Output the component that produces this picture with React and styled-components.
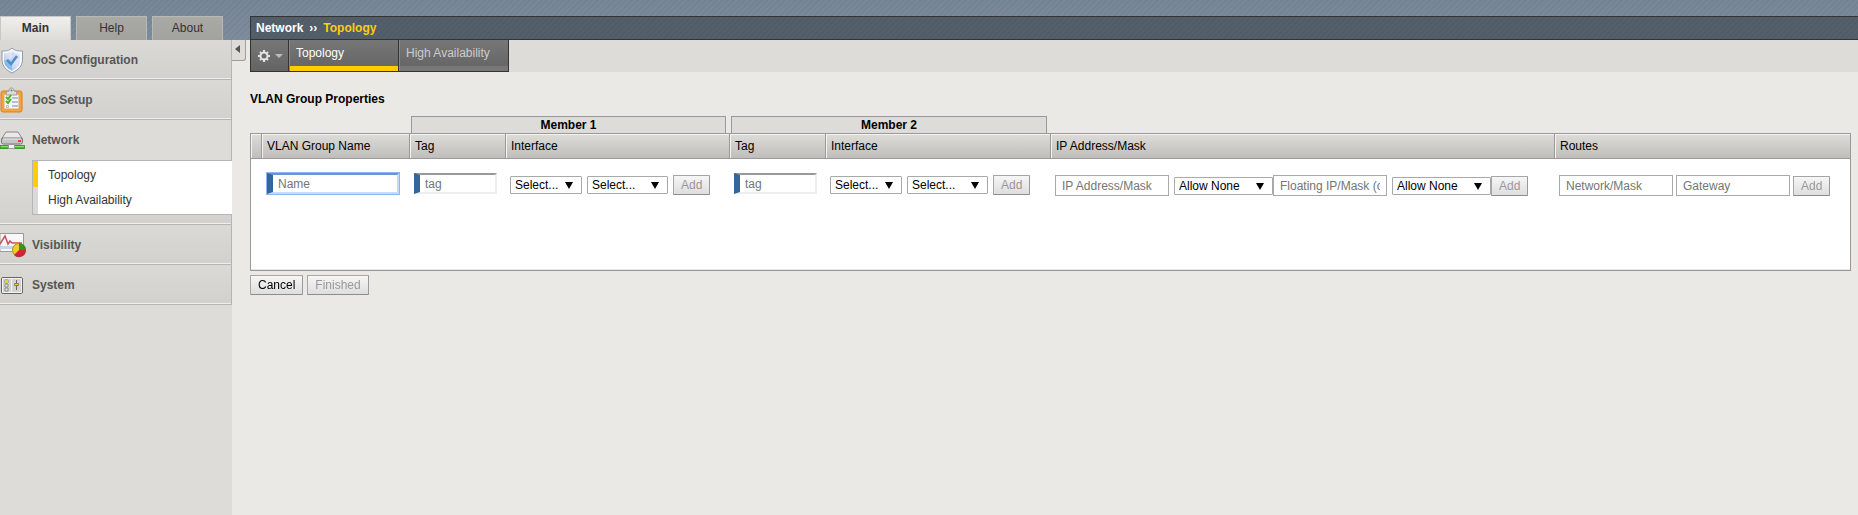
import React from "react";
import styled, { createGlobalStyle, css } from "styled-components";

const Global = createGlobalStyle`
  *, *::before, *::after { box-sizing: border-box; }
  html, body { margin: 0; }
  body, button, input, select, table {
    font: 12px/14px "Liberation Sans", Arial, sans-serif;
  }
  body { background: #eae9e5; color: #000; }
  a { color: inherit; text-decoration: none; }
  ul { list-style: none; margin: 0; padding: 0; }
`;

const Page = styled.div`
  min-height: 100vh;
  display: flex;
  background: linear-gradient(#738294 0, #7a8899 40px, transparent 40px);
`;

const stripes = css`
  background-image: repeating-linear-gradient(
    135deg,
    rgba(255, 255, 255, ${(p) => p.$stripe || 0.04}) 0 2px,
    transparent 2px 4px
  );
`;

const Shell = styled.div`
  flex: 1;
  min-width: 0;
  display: flex;
  ${stripes}
  background-size: 100% 40px;
  background-repeat: no-repeat;
`;

const Side = styled.aside`
  width: 232px;
  flex: none;
  padding-top: 16px;
  display: flex;
  flex-direction: column;
`;

const SideTabs = styled.nav`
  display: flex;
  gap: 5px;
`;

const SideTab = styled.a`
  width: 71px;
  height: 24px;
  padding-top: 4px;
  text-align: center;
  color: #333;
  border: 1px solid #b8b8b5;
  border-bottom: 0;
  background: linear-gradient(#a9a9a5, #a2a29e);
  ${(p) =>
    p.$active &&
    css`
      font-weight: bold;
      border-color: #c8c8c4;
      background: linear-gradient(#f0efed, #dddcd8);
    `}
`;

const SideBody = styled.div`
  flex: 1;
  background: #dddcd8;
`;

const Section = styled.li`
  border-bottom: 1px solid #b5b5b3;
  border-right: 1px solid #b5b5b3;
  box-shadow: inset 0 -1px #eeeeec;
  background: ${(p) =>
    p.$open
      ? "linear-gradient(#dddcd8 50%, #d2d1cd)"
      : "linear-gradient(#dad9d5, #d2d1cd)"};
  padding-bottom: ${(p) => (p.$open ? "9px" : "0")};
`;

const SectionLink = styled.a`
  display: flex;
  align-items: center;
  gap: 6px;
  height: ${(p) => (p.$open ? "40px" : "39px")};
  font-weight: bold;
  color: #555;
  svg { flex: none; }
`;

const SubMenu = styled.ul`
  margin-left: 32px;
  margin-right: -1px;
  border: 1px solid #b5b5b3;
  border-right: 0;
  background: #fff;
`;

const SubItem = styled.li`
  border-left: 5px solid ${(p) => (p.$active ? "#fc0" : "#dad9d9")};
  & + & a { border-top: 1px solid #e0e0e0; }
  a {
    display: block;
    height: ${(p) => (p.$active ? "26px" : "27px")};
    padding: ${(p) => (p.$active ? "7px" : "6px")} 10px 0;
    color: #333;
  }
`;

const Collapse = styled.button`
  flex: none;
  align-self: flex-start;
  margin-top: 40px;
  width: 14px;
  height: 21px;
  padding: 0 3px 2px;
  border: 1px solid #9d9d9a;
  border-width: 0 1px 1px 0;
  border-radius: 0 0 3px 0;
  background: #dddcd8;
  svg { display: block; }
`;

const Main = styled.main`
  flex: 1;
  min-width: 0;
  padding-top: 16px;
  margin-left: 4px;
`;

const Crumbs = styled.div`
  height: 24px;
  padding: 4px 5px;
  display: flex;
  gap: 6px;
  border: 1px solid #333;
  border-right: 0;
  background-color: #505c68;
  ${stripes}
  color: #fff;
  font-weight: bold;
  strong { color: #fc1; }
`;

const TabStrip = styled.nav`
  display: flex;
  height: 32px;
  background: #dddcd8;
`;

const tabSkin = css`
  border: 0;
  border-right: 1px solid #333;
  border-bottom: 1px solid #333;
  background: linear-gradient(#777, #636363);
`;

const GearButton = styled.button`
  ${tabSkin}
  width: 39px;
  border-left: 1px solid #333;
  padding: 0 5px 0 6px;
  display: flex;
  align-items: center;
  justify-content: space-between;
`;

const TopTab = styled.a`
  ${tabSkin}
  width: 110px;
  padding: 6px 7px;
  color: ${(p) => (p.$active ? "#fff" : "#ccc")};
  box-shadow: inset 1px 0 #888, inset 0 -5px ${(p) => (p.$active ? "#fc0" : "#777")};
`;

const Content = styled.form`
  padding: 20px 7px 0 0;
`;

const Title = styled.h1`
  margin: 0 0 10px;
  font-size: 12px;
  line-height: 14px;
`;

const Grid = styled.table`
  width: 100%;
  table-layout: fixed;
  border-collapse: separate;
  border-spacing: 0;
`;

const Group = styled.th`
  padding: 0 4px 0 1px;
  span {
    display: block;
    height: 17px;
    padding-top: 1px;
    border: 1px solid #999;
    border-bottom: 0;
    background: #dddcd8;
  }
`;

const Head = styled.th`
  height: 26px;
  padding: 0 0 1px 5px;
  text-align: left;
  font-weight: normal;
  border: 1px solid #999;
  border-left-width: ${(p) => (p.$first ? "1px" : "0")};
  background: linear-gradient(#dddcd8, #bfbeba);
  box-shadow: inset 1px 1px #f4f4f2;
`;

const Cell = styled.td`
  height: 112px;
  padding: ${(p) => p.$top || 16}px 0 0 ${(p) => p.$left || 4}px;
  vertical-align: top;
  background: #fff;
  border-bottom: 1px solid #999;
  box-shadow: inset 0 -1px #e4e4e4;
  &:first-child { border-left: 1px solid #999; }
  &:last-child { border-right: 1px solid #999; }
`;

const Line = styled.div`
  display: flex;
  align-items: flex-end;
  gap: ${(p) => p.$gap || 0}px;
`;

const Field = styled.input`
  width: 114px;
  height: 21px;
  padding: 0 6px;
  border: 1px solid #a9a9a9;
  border-radius: 0;
  background: #fff;
  color: #000;
  outline: 0;
  &::placeholder { color: #757575; opacity: 1; }
`;

const RequiredField = styled(Field)`
  width: ${(p) => p.$width}px;
  padding: 0 5px;
  border: 2px solid #eee;
  border-top-color: #999;
  border-left: 6px solid #369;
  &:focus {
    border-top-color: #6f93cd;
    border-right-color: #c8dafa;
    border-bottom-color: #c8dafa;
    box-shadow: 0 0 0 1px #8fb4f8;
  }
`;

const SelectBox = styled.span`
  display: inline-grid;
  align-items: center;
  width: ${(p) => p.$width}px;
  height: 18px;
  margin-bottom: 1px;
  &::after {
    content: "";
    grid-area: 1 / 1;
    justify-self: end;
    margin-right: 9px;
    border: solid transparent;
    border-width: 7px 4px 0;
    border-top-color: #000;
    pointer-events: none;
  }
  select {
    grid-area: 1 / 1;
    appearance: none;
    width: 100%;
    height: 18px;
    padding: 0 4px;
    border: 1px solid #a9a9a9;
    border-radius: 1px;
    background: #fff;
    color: #000;
  }
`;

const Button = styled.button`
  height: 20px;
  padding: 0 7px;
  white-space: nowrap;
  border: 1px solid #999;
  border-color: #a6a6a6 #999 #8c8c8c #a6a6a6;
  border-radius: 1px;
  background: linear-gradient(#f6f6f6, #dedede);
  color: #000;
  &:disabled { color: #999; }
`;

const Actions = styled.div`
  display: flex;
  gap: 4px;
  padding-top: 4px;
`;

function ShieldIcon() {
  return (
    <svg width="26" height="28" viewBox="0 0 26 28" aria-hidden="true">
      <defs>
        <linearGradient id="shield" x1="1" y1="0" x2="0" y2="1">
          <stop offset="0" stopColor="#eef0ff" />
          <stop offset="0.5" stopColor="#c3cbf1" />
          <stop offset="1" stopColor="#4ba6df" />
        </linearGradient>
      </defs>
      <path d="M12 2C9 5 6 5 2 5v9c0 6 4 10 10 13 6-3 10.500-7 10.500-13V5C18 5 15 5 12 2z" fill="#f7f8fa" stroke="#929aa8" />
      <path d="M12 5C9 7 7 7.500 4 7.500V14c0 5 3 8 8 11 5-3 8-6 8-11V7.500C17 7.500 15 7 12 5z" fill="url(#shield)" />
      <path d="M12 5C9 7 7 7.500 4 7.500V14l8-1zM12 13h8c0 5-3 9-8 12z" fill="#fff" opacity=".35" />
      <path d="m7 14 4 4 6-8" fill="none" stroke="#4a8fc9" strokeWidth="2.500" />
    </svg>
  );
}

function ClipboardIcon() {
  return (
    <svg width="26" height="28" viewBox="0 0 26 28" aria-hidden="true">
      <rect x="1" y="5" width="21" height="21" rx="2" fill="#f6a23b" stroke="#d98122" />
      <path d="M4 8h15v15H4z" fill="#f5f6fa" stroke="#d7a569" />
      <path d="M6 9c0-3 1-4 3-4 0-4 5-4 5 0 2 0 3 1 3 4z" fill="#ddd" stroke="#999" />
      <circle cx="11.500" cy="4.500" r="1" fill="#777" />
      <path d="M12 12h6M12 16h6M12 20h6" stroke="#b4bcd8" strokeWidth="2" />
      <path d="m6 11 2 2 3-4M6 15l2 2 3-4" fill="none" stroke="#46b321" strokeWidth="2" />
      <path d="M6.500 19.500h2v2h-2z" fill="#fff" stroke="#bbb" />
    </svg>
  );
}

function NetworkIcon() {
  return (
    <svg width="26" height="22" viewBox="0 0 26 22" aria-hidden="true">
      <path d="M1.500 10 6 3h12l4.500 7z" fill="#e9e9e9" stroke="#888" />
      <rect x="1.500" y="9" width="21" height="6" rx="2" fill="#c6c6c6" stroke="#777" />
      <path d="M3 10h18" stroke="#e8e8e8" />
      <rect x="18" y="11" width="3" height="2" fill="#e33" />
      <path d="M0 16.500h24.500v3H0z" fill="#45b731" stroke="#3a9a2c" />
      <path d="M1 17.500h23" stroke="#8be36f" />
      <path d="M8.500 15.500h6v4h-6z" fill="#f4f4f4" stroke="#999" />
    </svg>
  );
}

function VisibilityIcon() {
  return (
    <svg width="26" height="26" viewBox="0 0 26 26" aria-hidden="true">
      <path d="M0 1.500h23.500v18H0z" fill="#f8f8f8" stroke="#999" />
      <path d="M0 14h23v3H0z" fill="#c3d6ec" />
      <path d="m0 12 5-8 3 8 2-3 2 2h10" fill="none" stroke="#c4525c" strokeWidth="1.500" />
      <circle cx="19" cy="18" r="7" fill="#f0cf23" />
      <path d="M19 18V11a7 7 0 0 1 7 7z" fill="#299c20" />
      <path d="M19 18h7a7 7 0 0 1-12 5z" fill="#d7203b" />
      <circle cx="19" cy="18" r="6.500" fill="none" stroke="#6b5533" opacity=".5" />
    </svg>
  );
}

function SystemIcon() {
  return (
    <svg width="26" height="20" viewBox="0 0 26 20" aria-hidden="true">
      <rect x="1.500" y="2.500" width="21" height="16" rx="1.500" fill="#d4d4d4" stroke="#666" />
      <path d="M2.500 3.500h19v14h-19zM11.500 4v13" fill="none" stroke="#f2f2f2" />
      <path d="M5 5h3v3H5zM5 9h3v3H5zM5 13h3v3H5z" fill="#eee" stroke="#888" />
      <path d="M5 5h3v3H5z" fill="#ead02f" />
      <path d="M16.500 5v10" stroke="#666" />
      <path d="M14.500 8.500h4v2h-4z" fill="#ead02f" stroke="#8e8240" />
    </svg>
  );
}

function GearIcon() {
  return (
    <svg width="14" height="14" viewBox="0 0 14 14" aria-hidden="true">
      <circle cx="7" cy="7" r="3.500" fill="none" stroke="#e4e4e4" strokeWidth="2" />
      <path
        d="M7 1v2M7 11v2M1 7h2M11 7h2M3 3l1 1M10 10l1 1M11 3l-1 1M4 10l-1 1"
        stroke="#e4e4e4"
        strokeWidth="2"
      />
    </svg>
  );
}

function Select({ label, children, width }) {
  return (
    <SelectBox $width={width}>
      <select aria-label={label}>
        <option>{children}</option>
      </select>
    </SelectBox>
  );
}

function MemberCells({ name }) {
  return (
    <>
      <Cell $top={14}>
        <Line>
          <RequiredField $width={83} placeholder="tag" aria-label={`${name} tag`} />
        </Line>
      </Cell>
      <Cell>
        <Line $gap={5}>
          <Select label={`${name} interface type`} width={72}>Select...</Select>
          <Select label={`${name} interface`} width={81}>Select...</Select>
          <Button type="button" disabled>Add</Button>
        </Line>
      </Cell>
    </>
  );
}

const columns = [12, 148, 96, 224, 96, 225, 504];

export default function App() {
  return (
    <Page>
      <Global />
      <Shell>
        <Side>
          <SideTabs>
            <SideTab href="#main" $active>Main</SideTab>
            <SideTab href="#help">Help</SideTab>
            <SideTab href="#about">About</SideTab>
          </SideTabs>
          <SideBody>
            <ul>
              <Section>
                <SectionLink href="#dos"><ShieldIcon />DoS Configuration</SectionLink>
              </Section>
              <Section>
                <SectionLink href="#setup"><ClipboardIcon />DoS Setup</SectionLink>
              </Section>
              <Section $open>
                <SectionLink href="#network" $open><NetworkIcon />Network</SectionLink>
                <SubMenu>
                  <SubItem $active><a href="#topology">Topology</a></SubItem>
                  <SubItem><a href="#ha">High Availability</a></SubItem>
                </SubMenu>
              </Section>
              <Section>
                <SectionLink href="#visibility"><VisibilityIcon />Visibility</SectionLink>
              </Section>
              <Section>
                <SectionLink href="#system"><SystemIcon />System</SectionLink>
              </Section>
            </ul>
          </SideBody>
        </Side>
        <Collapse type="button" aria-label="Collapse menu">
          <svg width="5" height="8" viewBox="0 0 5 8"><path d="M5 0v8L0 4z" fill="#555" /></svg>
        </Collapse>
        <Main>
          <Crumbs $stripe={0.02}>
            <span>Network</span>
            <span>››</span>
            <strong>Topology</strong>
          </Crumbs>
          <TabStrip>
            <GearButton type="button" aria-label="Options">
              <GearIcon />
              <svg width="8" height="4" viewBox="0 0 8 4"><path d="M0 0h8L4 4z" fill="#bbb" /></svg>
            </GearButton>
            <TopTab href="#topology" $active>Topology</TopTab>
            <TopTab href="#ha">High Availability</TopTab>
          </TabStrip>
          <Content>
            <Title>VLAN Group Properties</Title>
            <Grid>
              <colgroup>
                {columns.map((w, i) => <col key={i} width={w} />)}
                <col />
              </colgroup>
              <thead>
                <tr>
                  <td colSpan={2} />
                  <Group colSpan={2} scope="colgroup"><span>Member 1</span></Group>
                  <Group colSpan={2} scope="colgroup"><span>Member 2</span></Group>
                  <td colSpan={2} />
                </tr>
                <tr>
                  <Head as="td" $first />
                  <Head>VLAN Group Name</Head>
                  <Head>Tag</Head>
                  <Head>Interface</Head>
                  <Head>Tag</Head>
                  <Head>Interface</Head>
                  <Head>IP Address/Mask</Head>
                  <Head>Routes</Head>
                </tr>
              </thead>
              <tbody>
                <tr>
                  <Cell />
                  <Cell $top={14} $left={5}>
                    <Line>
                      <RequiredField $width={132} placeholder="Name" aria-label="VLAN group name" autoFocus />
                    </Line>
                  </Cell>
                  <MemberCells name="Member 1" />
                  <MemberCells name="Member 2" />
                  <Cell>
                    <Line>
                      <Line $gap={5}>
                        <Field placeholder="IP Address/Mask" aria-label="IP address/mask" />
                        <Select label="IP services" width={99}>Allow None</Select>
                      </Line>
                      <Line $gap={5}>
                        <Field placeholder="Floating IP/Mask (optional)" aria-label="Floating IP/mask" />
                        <Select label="Floating IP services" width={99}>Allow None</Select>
                      </Line>
                      <Button type="button" disabled>Add</Button>
                    </Line>
                  </Cell>
                  <Cell>
                    <Line $gap={3}>
                      <Field placeholder="Network/Mask" aria-label="Network/mask" />
                      <Field placeholder="Gateway" aria-label="Gateway" />
                      <Button type="button" disabled>Add</Button>
                    </Line>
                  </Cell>
                </tr>
              </tbody>
            </Grid>
            <Actions>
              <Button type="button">Cancel</Button>
              <Button type="button" disabled>Finished</Button>
            </Actions>
          </Content>
        </Main>
      </Shell>
    </Page>
  );
}
